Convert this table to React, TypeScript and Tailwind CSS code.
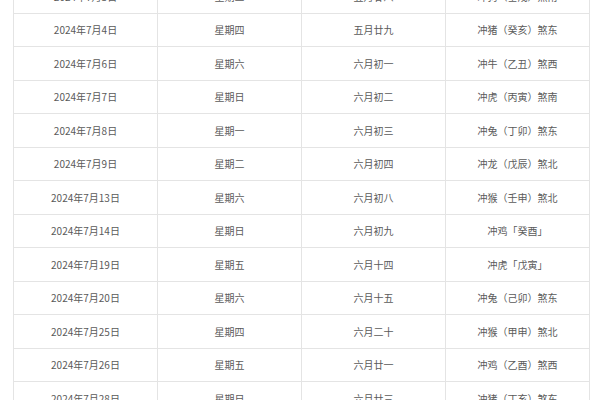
import React from 'react';

const rows = [
  ['2024年7月3日', '星期三', '五月廿八', '冲狗（壬戌）煞南'],
  ['2024年7月4日', '星期四', '五月廿九', '冲猪（癸亥）煞东'],
  ['2024年7月6日', '星期六', '六月初一', '冲牛（乙丑）煞西'],
  ['2024年7月7日', '星期日', '六月初二', '冲虎（丙寅）煞南'],
  ['2024年7月8日', '星期一', '六月初三', '冲兔（丁卯）煞东'],
  ['2024年7月9日', '星期二', '六月初四', '冲龙（戊辰）煞北'],
  ['2024年7月13日', '星期六', '六月初八', '冲猴（壬申）煞北'],
  ['2024年7月14日', '星期日', '六月初九', '冲鸡「癸酉」'],
  ['2024年7月19日', '星期五', '六月十四', '冲虎「戊寅」'],
  ['2024年7月20日', '星期六', '六月十五', '冲兔（己卯）煞东'],
  ['2024年7月25日', '星期四', '六月二十', '冲猴（甲申）煞北'],
  ['2024年7月26日', '星期五', '六月廿一', '冲鸡（乙酉）煞西'],
  ['2024年7月28日', '星期日', '六月廿三', '冲猪（丁亥）煞东'],
];

const App = () => {
  return (
    <div
      className="w-[600px] h-[400px] overflow-hidden bg-white"
      style={{ fontFamily: '"Noto Sans CJK SC", "Noto Sans", sans-serif' }}
    >
      <div className="-mt-[20px] ml-[13px] w-[577px] border-l border-[#e4e4e4]">
        {rows.map((row, i) => (
          <div key={i} className="flex h-[33.5px] border-b border-[#e4e4e4]">
            {row.map((cell, j) => (
              <div
                key={j}
                className="w-[144px] shrink-0 flex items-center justify-center border-r border-[#e4e4e4] text-[10px] text-[#5a5a5a]"
              >
                {cell}
              </div>
            ))}
          </div>
        ))}
      </div>
    </div>
  );
};

export default App;
